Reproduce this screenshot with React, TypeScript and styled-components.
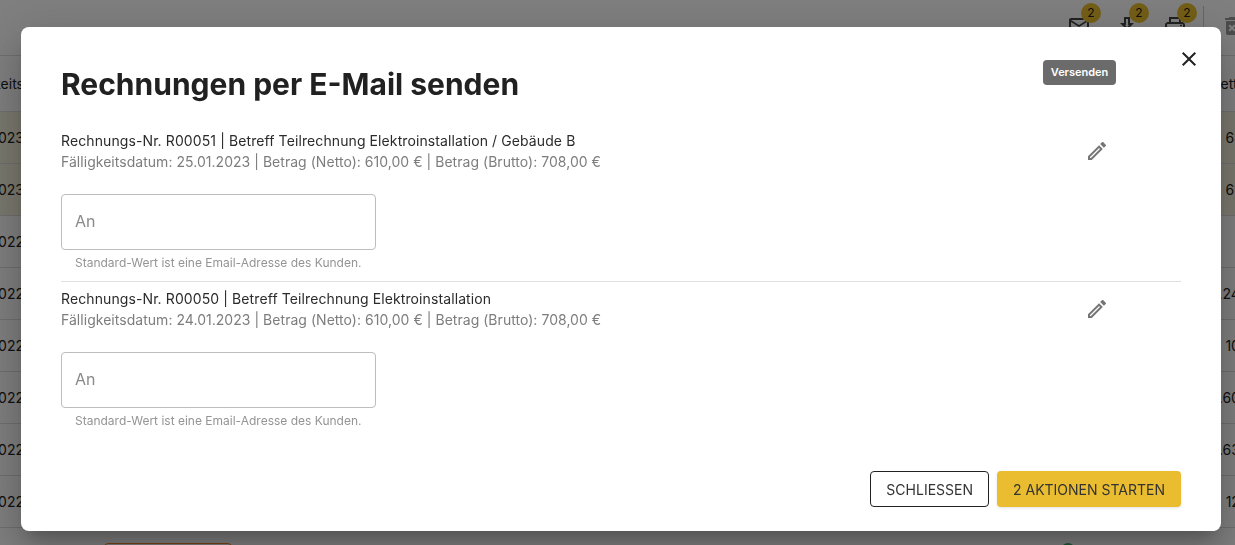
import React from 'react';
import styled, { createGlobalStyle } from 'styled-components';
import { MdClose, MdDeleteForever, MdOutlineEdit, MdOutlineEmail, MdOutlinePrint } from 'react-icons/md';

const invoices = [
  {
    subject: 'Rechnungs-Nr. R00051 | Betreff Teilrechnung Elektroinstallation / Gebäude B',
    details: 'Fälligkeitsdatum: 25.01.2023 | Betrag (Netto): 610,00 € | Betrag (Brutto): 708,00 €',
  },
  {
    subject: 'Rechnungs-Nr. R00050 | Betreff Teilrechnung Elektroinstallation',
    details: 'Fälligkeitsdatum: 24.01.2023 | Betrag (Netto): 610,00 € | Betrag (Brutto): 708,00 €',
  },
];

const tableRows = [
  { date: '25.01.2023', amount: '610,00 €', open: true },
  { date: '24.01.2023', amount: '610,00 €', open: true },
  { date: '30.12.2022', amount: '', open: false },
  { date: '28.12.2022', amount: '1.240,00 €', open: false },
  { date: '21.12.2022', amount: '100,00 €', open: false },
  { date: '15.12.2022', amount: '1.600,00 €', open: false },
  { date: '09.12.2022', amount: '1.630,00 €', open: false },
  { date: '02.12.2022', amount: '120,00 €', open: false },
];

const DownloadIcon = () => (
  <svg width="24" height="24" viewBox="0 0 24 24" fill="currentColor">
    <path d="M19 9h-4V3H9v6H5l7 7 7-7zM11 5h2v6h1.17L12 13.17 9.83 11H11V5zM5 18h14v2H5z" />
  </svg>
);

const App = () => {
  return (
    <>
      <GlobalStyle />
      <Page>
        <Toolbar>
          <ToolIcon>
            <MdOutlineEmail size={24} />
            <Badge>2</Badge>
          </ToolIcon>
          <ToolIcon>
            <DownloadIcon />
            <Badge>2</Badge>
          </ToolIcon>
          <ToolIcon>
            <MdOutlinePrint size={24} />
            <Badge>2</Badge>
          </ToolIcon>
          <ToolDivider />
          <TrashIcon>
            <MdDeleteForever size={24} />
          </TrashIcon>
        </Toolbar>
        <TableHead>
          <LeftCell>Fälligkeits</LeftCell>
          <RightHeadCell>Netto</RightHeadCell>
        </TableHead>
        {tableRows.map((row) => (
          <TableRow key={row.date} open={row.open}>
            <LeftCell>{row.date}</LeftCell>
            <RightCell>{row.amount}</RightCell>
          </TableRow>
        ))}
        <TableFooter>
          <FooterButton />
          <FooterDot />
        </TableFooter>
      </Page>

      <Overlay>
        <Modal>
          <CloseButton aria-label="Schließen">
            <MdClose size={24} />
          </CloseButton>
          <Tooltip>Versenden</Tooltip>
          <Title>Rechnungen per E-Mail senden</Title>
          <List>
            {invoices.map((invoice) => (
              <Invoice key={invoice.subject}>
                <InvoiceHead>
                  <div>
                    <Subject>{invoice.subject}</Subject>
                    <Details>{invoice.details}</Details>
                  </div>
                  <EditButton aria-label="Versenden">
                    <MdOutlineEdit size={24} />
                  </EditButton>
                </InvoiceHead>
                <MailInput placeholder="An" />
                <HelperText>Standard-Wert ist eine Email-Adresse des Kunden.</HelperText>
              </Invoice>
            ))}
          </List>
          <Actions>
            <OutlineButton>Schliessen</OutlineButton>
            <PrimaryButton>2 Aktionen starten</PrimaryButton>
          </Actions>
        </Modal>
      </Overlay>
    </>
  );
};

export default App;

const GlobalStyle = createGlobalStyle`
  html, body {
    margin: 0;
    height: 100%;
    overflow: hidden;
    background: #fff;
  }
  body {
    font-family: Inter, "Liberation Sans", sans-serif;
    color: #212121;
  }
  * {
    box-sizing: border-box;
  }
`;

const Page = styled.div`
  height: 545px;
  overflow: hidden;
`;

const Toolbar = styled.div`
  display: flex;
  justify-content: flex-end;
  height: 55px;
  padding: 14px 0 0;
`;

const ToolIcon = styled.div`
  position: relative;
  width: 24px;
  height: 24px;
  margin-right: 24px;
  color: #444;
`;

const Badge = styled.span`
  position: absolute;
  top: -11px;
  left: 14px;
  width: 20px;
  height: 20px;
  border-radius: 50%;
  background: #e9bd2f;
  color: #212121;
  font-size: 12px;
  line-height: 20px;
  text-align: center;
`;

const ToolDivider = styled.div`
  width: 1px;
  height: 34px;
  margin: -8px 0 0 -8px;
  background: #ccc;
`;

const TrashIcon = styled.div`
  width: 24px;
  height: 24px;
  margin: 0 -9px 0 16px;
  color: #999;
`;

const TableHead = styled.div`
  display: flex;
  justify-content: space-between;
  align-items: center;
  height: 57px;
  border-top: 1px solid #dedede;
  border-bottom: 1px solid #dedede;
  font-size: 14px;
`;

const TableRow = styled.div<{ open: boolean }>`
  display: flex;
  justify-content: space-between;
  align-items: center;
  height: 52px;
  border-bottom: 1px solid #dedede;
  background: ${(props) => (props.open ? '#f5f2de' : '#fff')};
  font-size: 14px;
`;

const LeftCell = styled.div`
  display: flex;
  justify-content: flex-end;
  width: 24px;
  white-space: nowrap;
`;

const RightCell = styled.div`
  display: flex;
  justify-content: flex-end;
  width: 80px;
  margin-right: -48px;
  white-space: nowrap;
`;

const RightHeadCell = styled.div`
  width: 80px;
  margin-right: -55px;
  white-space: nowrap;
`;

const TableFooter = styled.div`
  display: flex;
  justify-content: space-between;
  padding: 15px 160px 0 104px;
`;

const FooterButton = styled.div`
  width: 128px;
  height: 36px;
  border: 1px solid #f0892b;
  border-radius: 4px;
`;

const FooterDot = styled.div`
  width: 14px;
  height: 14px;
  border-radius: 50%;
  background: #3fae6a;
`;

const Overlay = styled.div`
  position: fixed;
  inset: 0;
  display: flex;
  padding: 27px 14px 14px 21px;
  background: rgba(0, 0, 0, 0.5);
`;

const Modal = styled.div`
  position: relative;
  display: flex;
  flex: 1;
  flex-direction: column;
  padding: 40px 40px 24px;
  border-radius: 8px;
  background: #fff;
  box-shadow: 0 11px 15px -7px rgba(0, 0, 0, 0.2), 0 24px 38px 3px rgba(0, 0, 0, 0.14), 0 9px 46px 8px rgba(0, 0, 0, 0.12);
`;

const CloseButton = styled.button`
  position: absolute;
  top: 20px;
  right: 20px;
  display: flex;
  padding: 0;
  border: 0;
  background: none;
  color: #212121;
`;

const Tooltip = styled.div`
  position: absolute;
  top: 33px;
  left: 1022px;
  width: 73px;
  border-radius: 4px;
  background: #6b6b6b;
  color: #fff;
  font-size: 11px;
  font-weight: 600;
  line-height: 25px;
  letter-spacing: -0.02px;
  text-align: center;
`;

const Title = styled.h2`
  margin: 0 0 23px;
  font-size: 30px;
  font-weight: 700;
  line-height: 34px;
  color: #212121;
`;

const List = styled.div`
  flex: 1;
`;

const Invoice = styled.section`
  padding: 6px 0 8px;
  border-bottom: 1px solid #e0e0e0;

  &:last-child {
    border-bottom: 0;
  }
`;

const InvoiceHead = styled.div`
  display: flex;
  justify-content: space-between;
  align-items: center;
`;

const Subject = styled.div`
  font-size: 14px;
  line-height: 21px;
  letter-spacing: 0.1px;
  color: #2b2b2b;
`;

const Details = styled.div`
  font-size: 14px;
  line-height: 21px;
  letter-spacing: 0.035px;
  color: #7d7d7d;
`;

const EditButton = styled.button`
  display: flex;
  margin-right: 72px;
  padding: 0;
  border: 0;
  background: none;
  color: #757575;
`;

const MailInput = styled.input`
  display: block;
  width: 315px;
  height: 56px;
  margin-top: 22px;
  padding: 0 13px 2px;
  border: 1px solid #bdbdbd;
  border-radius: 4px;
  outline: none;
  font-family: inherit;
  font-size: 16px;
  color: #212121;

  &::placeholder {
    color: #8a8a8a;
    opacity: 1;
  }
`;

const HelperText = styled.p`
  margin: 3px 0 0 14px;
  font-size: 12px;
  line-height: 20px;
  color: #949494;
`;

const Actions = styled.div`
  display: flex;
  justify-content: flex-end;
  gap: 8px;
`;

const OutlineButton = styled.button`
  height: 36px;
  padding: 0 15px;
  border: 1px solid #212121;
  border-radius: 4px;
  background: #fff;
  color: #333;
  font-family: inherit;
  font-size: 14px;
  text-transform: uppercase;
`;

const PrimaryButton = styled.button`
  height: 36px;
  padding: 0 16px;
  border: 0;
  border-radius: 4px;
  background: #e9bd2f;
  color: #333;
  font-family: inherit;
  font-size: 14px;
  text-transform: uppercase;
  box-shadow: 0 1px 3px rgba(0, 0, 0, 0.12);
`;
